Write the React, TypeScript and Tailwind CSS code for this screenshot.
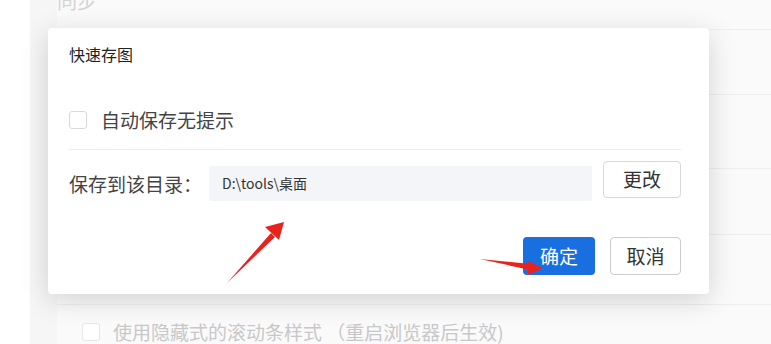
import React from "react";

const font = { fontFamily: '"Noto Sans CJK SC", "Noto Sans", sans-serif' };

function Row({ children, line = true, h }: { children?: React.ReactNode; line?: boolean; h: string }) {
  return <div className={`${h} ${line ? "border-b border-[#eeeeee]" : ""} flex items-center`}>{children}</div>;
}

export default function App() {
  return (
    <div className="relative w-[771px] h-[344px] overflow-hidden bg-white" style={font}>
      {/* underlying settings page */}
      <div className="absolute inset-0 flex">
        <div className="w-[30px] bg-white" />
        <div className="flex-1 bg-[#f6f6f6] pl-[27px] flex flex-col">
          <div className="flex-1 bg-[#fafafa] flex flex-col">
            <div className="h-[30px] border-b border-[#efefef] relative">
              <div className="absolute left-0 top-[-13px] text-[20px] leading-[28px] text-[#d4d4d4]">同步</div>
            </div>
            <Row h="h-[65px]" />
            <Row h="h-[74px]" />
            <Row h="h-[66px]" />
            <Row h="h-[70px]" />
            <div className="flex items-center pl-[25px] pt-[16px] gap-[13px]">
              <div className="w-[18px] h-[18px] border border-[#e6e6e6] rounded-[3px] bg-white" />
              <span className="text-[19px] leading-[22px] text-[#c8c8c8] whitespace-nowrap">使用隐藏式的滚动条样式 （重启浏览器后生效)</span>
            </div>
          </div>
        </div>
      </div>

      {/* dialog */}
      <div className="absolute left-[48px] top-[28px] w-[661px] h-[266px] bg-white rounded-[4px] shadow-[0_6px_28px_rgba(0,0,0,0.16)] pt-[15px] pl-[21px] pr-[28px] flex flex-col">
        <div className="text-[16px] leading-[22px] text-[#222]">快速存图</div>
        <div className="mt-[44px] flex items-center h-[22px]">
          <div className="w-[18px] h-[18px] border border-[#d9d9d9] rounded-[3px] bg-white" />
          <span className="ml-[14px] text-[19px] leading-[22px] text-[#444]">自动保存无提示</span>
        </div>
        <div className="mt-[18px] h-px bg-[#ececec]" />
        <div className="flex items-start">
          <div className="w-[140px] mt-[21px] text-[19px] leading-[26px] text-[#444] whitespace-nowrap">保存到该目录：</div>
          <div className="mt-[16px] w-[383px] h-[35px] bg-[#f4f5f8] rounded-[2px] flex items-center pl-[13px] text-[14px] text-[#333]">
            D:\tools\桌面
          </div>
          <button className="ml-[11px] mt-[11px] w-[78px] h-[37px] border border-[#d8d8d8] rounded-[4px] bg-white text-[19px] text-[#333] flex items-center justify-center">
            更改
          </button>
        </div>
        <div className="mt-[36px] flex justify-end gap-[15px]">
          <button className="w-[72px] h-[38px] rounded-[4px] bg-[#1a6fe0] text-white text-[19px] flex items-center justify-center">
            确定
          </button>
          <button className="w-[71px] h-[38px] rounded-[4px] border border-[#cccccc] bg-white text-[19px] text-[#333] flex items-center justify-center">
            取消
          </button>
        </div>
      </div>

      {/* annotation arrows */}
      <svg className="absolute left-0 top-0" width="771" height="344" viewBox="0 0 771 344">
        <polygon points="227,283 271,233 275,237" fill="#e8231d" />
        <polygon points="284,222 265,227 279,240" fill="#e8231d" />
        <polygon points="480,259 531,264 530,270" fill="#e8231d" />
        <polygon points="543,268 528,261 528,275" fill="#e8231d" />
      </svg>
    </div>
  );
}
